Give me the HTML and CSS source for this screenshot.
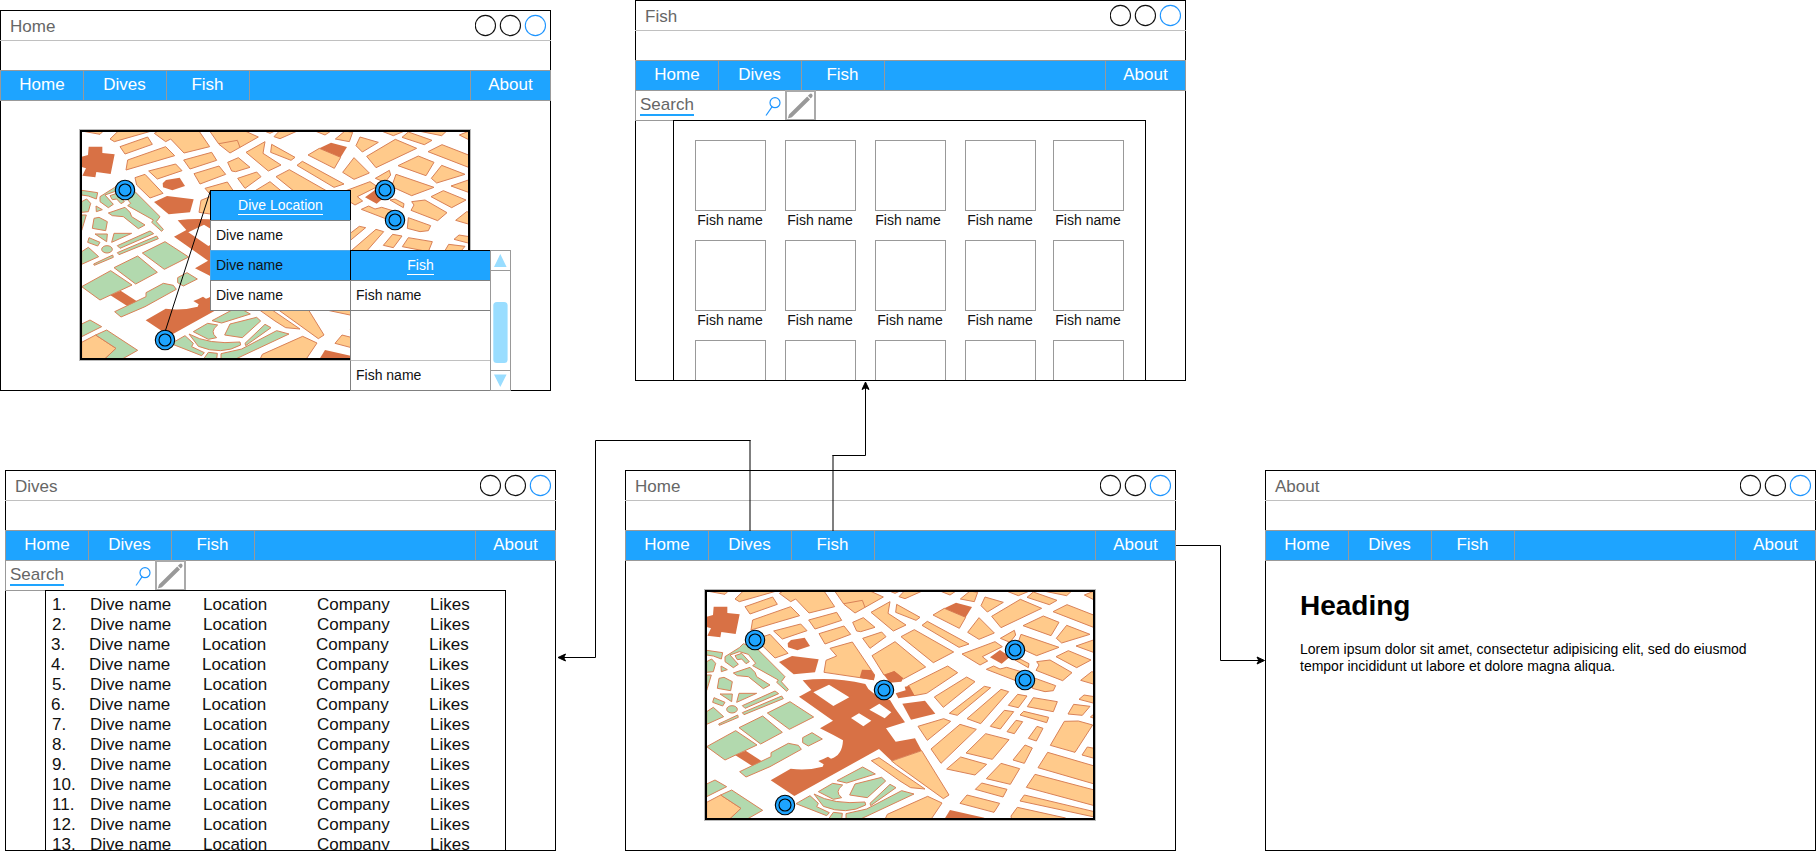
FILE: index.html
```html
<!DOCTYPE html>
<html lang="en">
<head>
<meta charset="utf-8">
<title>Dive site wireframes</title>
<link rel="stylesheet" href="styles.css">
</head>
<body>
<svg class="defs" width="0" height="0" aria-hidden="true">
  <symbol id="city" viewBox="15 15 1170 690">
    <rect x="15" y="15" width="1170" height="690" fill="#fff"/>
    <g class="red">
      <path d="M41,65 82,65 82,84 119,88 107,147 64,141 61,157 22,152 33,130 20,126 20,95 39,90Z"/>
      <path d="M263,175 273,165 314,158 330,183 292,196 264,187Z"/>
      <path d="M237,231 276,213 356,223 345,262 281,268Z"/>
      <path fill-rule="evenodd" d="M308,286Q400,275 496,297L505,312 527,330 570,345 585,370 615,412 558,430 587,470 645,460 665,497 575,528 537,492 283,633 212,586 272,551Q320,558 368,545L371,538 355,528 370,522 384,515 393,521Q427,512 429,466L400,450 360,430 399,407 297,335 334,315ZM340,322 387,299 448,337 400,363ZM453,399 477,385 514,407 490,424ZM508,374 538,356 574,382 554,400Z"/>
      <path d="M105,510 137,497 188,530 160,545Z"/>
    </g>
    <g class="orange">
      <path d="M20,18 85,18 75,28Z"/>
      <path d="M105,42 130,18 230,18 118,50Z"/>
      <path d="M135,65 218,36 232,58 150,87Z"/>
      <path d="M158,105 272,65 299,92 153,135Z"/>
      <path d="M221,138 302,117 321,137 247,162Z"/>
      <path d="M180,158 210,148 264,205 225,219 185,180Z"/>
      <path d="M238,25 250,18 372,18 404,65 327,84 287,42 272,50Z"/>
      <path d="M326,105 410,82 425,106 345,132Z"/>
      <path d="M357,146 432,123 452,148 375,177Z"/>
      <path d="M390,190 457,171 524,270 520,284 372,262 378,226 410,213Z"/>
      <path d="M404,18 510,18 550,36 465,84 432,58Z"/>
      <path class="line" d="M432,56 487,46 495,67"/>
      <path d="M458,112 490,98 525,127 482,140 470,138Z"/>
      <path d="M488,160 545,141 558,155 510,190Z"/>
      <path d="M513,82 570,50 564,85 618,120 580,138Z"/>
      <path d="M590,58 660,97 648,106 587,82Z"/>
      <path d="M568,18 600,18 585,25Z"/>
      <path d="M516,212 585,170 677,246 610,282 583,260 552,270Z"/>
      <path d="M575,528 665,497 747,630 730,641 590,540Z"/>
      <path d="M514,527 537,518 675,612 632,608 600,588Z"/>
      <path d="M555,703 562,688 683,634 726,654 693,703Z"/>
      <path d="M20,652 62,630 123,670 88,703 20,703Z"/>
    </g>
    <g class="red">
      <path d="M479,278 486,254 513,255 524,270 522,286Z"/>
      <path d="M552,270 583,258 610,280 604,290 570,293Z"/>
    </g>
    <g class="orange" transform="translate(585 0)">
      <path d="M12,35 28,18 82,18 30,41Z"/>
      <path d="M135,18 183,18 165,30Z"/>
      <path d="M196,42 225,18 248,22 238,50Z"/>
      <path d="M270,36 325,52 277,81 258,62Z"/>
      <path d="M290,94 376,43 440,70 318,128Z"/>
      <path d="M334,18 404,18 370,32Z"/>
      <path d="M396,37 415,21 486,46 463,59Z"/>
      <path d="M445,18 530,18 515,32Z"/>
      <path d="M568,30 598,18 598,45Z"/>
      <path d="M474,80 516,59 598,91 598,128Z"/>
      <path d="M384,122 445,93 492,112 468,152Z"/>
      <path d="M515,121 585,148 500,174 484,160Z"/>
      <path d="M543,183 598,164 598,203Z"/>
      <path d="M483,215 520,197 588,225 545,248Z"/>
      <path d="M114,90 148,70 212,97 193,130Z"/>
      <path d="M218,142 252,98 298,144 252,163Z"/>
      <path d="M81,121 97,109 222,177 192,187Z"/>
      <path d="M18,155 58,134 176,201 115,233Z"/>
      <path d="M201,207 300,170 322,185 262,215 278,228 255,240Z"/>
      <path d="M316,160 358,136 362,150 345,172Z"/>
      <path d="M365,185 378,148 492,187 425,212Z"/>
      <path d="M425,230 465,225 531,263 503,287 423,256 432,240Z"/>
      <path d="M360,225 375,222 402,236 400,248Z"/>
      <path d="M274,253 296,243 315,252 335,247 385,262 365,288Z"/>
      <path d="M415,278 482,302 475,317 450,320 412,310Z"/>
      <path d="M557,286 590,260 598,262 598,298Z"/>
      <path d="M38,303 158,243 188,263 95,325 57,332Z"/>
      <path d="M118,336 215,276 240,290 145,367Z"/>
      <path d="M163,385 268,304 287,308 187,391Z"/>
      <path d="M216,401 318,313 341,320 257,416Z"/>
      <path d="M340,361 368,328 396,333 370,368Z"/>
      <path d="M397,365 415,338 487,350 475,380Z"/>
      <path d="M552,343 567,330 598,335 598,355Z"/>
      <path d="M519,387 536,358 585,364 562,391Z"/>
      <path d="M586,396 598,386 598,400Z"/>
      <path d="M375,390 386,379 461,397 455,413Z"/>
      <path d="M286,424 328,376 356,380 316,432Z"/>
      <path d="M336,440 363,406 383,410 358,446Z"/>
      <path d="M400,460 426,424 444,430 424,468Z"/>
      <path d="M69,424 146,401 167,409 97,466Z"/>
      <path d="M108,492 195,418 244,433 138,535Z"/>
      <path d="M213,504 272,446 342,464 292,523Z"/>
      <path d="M155,552 197,516 275,538 240,570Z"/>
      <path d="M354,525 390,480 412,489 388,535Z"/>
      <path d="M466,481 508,409 550,408 593,420 540,502Z"/>
      <path d="M561,510 577,486 598,490 598,520Z"/>
      <path d="M429,548 458,502 598,543 598,597Z"/>
      <path d="M394,607 420,568 598,615 598,662Z"/>
      <path d="M375,648 388,630 598,680 598,696Z"/>
      <path d="M348,693 367,667 512,699 510,706 350,706Z"/>
      <path d="M274,581 318,535 374,551 346,598Z"/>
      <path d="M241,613 260,594 336,613 324,636Z"/>
      <path d="M195,655 216,630 314,655 297,682Z"/>
    </g>
    <g class="red" transform="translate(585 0)">
      <path d="M148,70 183,53 231,66 212,97Z"/>
      <path d="M2,325 32,316 29,305 43,303 59,332 10,340Z"/>
      <path d="M22,356 90,347 121,386 48,404Z"/>
      <path d="M285,217 315,195 345,215 320,236Z"/>
      <path d="M148,703 165,675 268,698 268,703Z"/>
    </g>
    <g class="green">
      <path d="M20,196 68,203 64,222 40,213 20,210Z"/>
      <path d="M20,230 35,222 47,235 40,260 20,262Z"/>
      <path d="M20,270 34,270 22,310 20,316Z"/>
      <path d="M52,310 57,280 72,277 97,290 92,317Z"/>
      <path d="M75,215 118,188 130,176 175,195 255,275 244,290 265,313 260,319 230,292 235,285 158,242 167,235 145,208 118,200 90,210 115,238 100,248 75,230Z"/>
      <path d="M105,212 125,205 148,230 138,236 125,222 112,224Z"/>
      <path d="M63,243 82,254 64,260Z"/>
      <path d="M100,264 150,247 165,262 170,275 210,300 190,311 145,275 112,272Z"/>
      <path d="M60,327 97,327 95,350Z"/>
      <path d="M110,352 117,325 170,325Z"/>
      <path d="M42,338 75,352 68,363 38,352Z"/>
      <ellipse cx="96" cy="373" rx="16" ry="11"/>
      <path d="M20,380 40,367 71,395 20,418Z"/>
      <path d="M56,417 113,390 115,397 58,421Z"/>
      <path d="M127,362 225,318 236,326 135,370Z"/>
      <path d="M127,383 245,333 250,341 132,389Z"/>
      <path d="M202,384 270,350 341,396 268,433Z"/>
      <path d="M117,428 188,393 247,442 182,477Z"/>
      <path d="M20,485 107,437 171,480 75,525Z"/>
      <path d="M119,560 213,515 213,503 265,475 295,481 304,493 210,545 138,576Z"/>
      <path d="M308,458 336,443 367,462 325,483 308,473Z"/>
      <path d="M20,597 45,585 80,605 20,635Z"/>
      <path d="M62,630 95,615 188,676 140,703 88,703 123,670Z"/>
      <path d="M288,656 330,632 355,655 350,665 388,683 380,692Z"/>
      <path d="M411,587 488,546 526,567 440,594Z"/>
      <path d="M355,620 398,595 428,600Q402,620 425,638L400,643Z"/>
      <path d="M449,630 465,597 545,577 557,588 502,638Z"/>
      <path d="M342,627Q400,660 495,651L497,660Q440,692 370,664Z"/>
      <path d="M385,703 400,682 427,685 425,703Z"/>
      <path d="M438,686 500,672 605,617 642,627 480,703 438,703Z"/>
      <path d="M510,655 570,598 588,608 512,662Z"/>
    </g>
    <rect x="18" y="18" width="1164" height="684" fill="none" stroke="#000" stroke-width="6"/>
  </symbol>
  <symbol id="pin" viewBox="0 0 22 22">
    <circle cx="11" cy="11" r="9.7" fill="#1ea4ff" stroke="#000" stroke-width="1.1"/>
    <circle cx="11" cy="11" r="6" fill="none" stroke="#000" stroke-width="1.1"/>
  </symbol>
  <symbol id="controls" viewBox="0 0 72 24">
    <g fill="none" stroke-width="1.1">
      <circle cx="10.4" cy="12.5" r="10.1" stroke="#111"/>
      <circle cx="35.4" cy="12.5" r="10.1" stroke="#111"/>
      <circle cx="60.4" cy="12.5" r="10.1" stroke="#1e95ff"/>
    </g>
  </symbol>
  <symbol id="lens" viewBox="0 0 17 20">
    <g fill="none" stroke="#1e95ff" stroke-width="1.2">
      <ellipse cx="11" cy="5.7" rx="5" ry="5"/>
      <path d="M8,9.9 2,18.5"/>
    </g>
  </symbol>
  <symbol id="pencil" viewBox="0 0 31 31">
    <rect x="1" y="1" width="29" height="29" fill="#fff" stroke="#aaa" stroke-width="2"/>
    <path fill="#999" d="M2.8,28.5 4,24.4 22.2,6.6 25,9.4 6.9,27.3ZM22.9,5.8 24.5,4.2Q26,3 27.1,4.2 28.2,5.6 27.1,7L25.7,8.6Z"/>
  </symbol>
</svg>

<main class="board">

  <section class="window home-open">
    <header class="titlebar"><span>Home</span><svg class="controls"><use href="#controls"/></svg></header>
    <nav class="nav"><a>Home</a><a>Dives</a><a>Fish</a><i></i><a class="last">About</a></nav>
    <div class="map-area">
      <div class="map">
        <svg class="city"><use href="#city"/></svg>
        <svg class="pin p1"><use href="#pin"/></svg>
        <svg class="pin p3"><use href="#pin"/></svg>
        <svg class="pin p4"><use href="#pin"/></svg>
        <svg class="pin p5"><use href="#pin"/></svg>
      </div>
    </div>
    <div class="popup dives-popup">
      <div class="popup-head"><span>Dive Location</span></div>
      <div class="row">Dive name</div>
      <div class="row selected">Dive name</div>
      <div class="row">Dive name</div>
    </div>
    <div class="popup fish-popup">
      <div class="fish-list">
        <div class="popup-head"><span>Fish</span></div>
        <div class="row">Fish name</div>
        <div class="spacer"></div>
        <div class="row end">Fish name</div>
      </div>
      <svg class="scrollbar" viewBox="0 0 21 141">
        <rect x=".5" y=".5" width="20" height="140" fill="#fff" stroke="#999"/>
        <path d="M0,20.5H21M0,120.5H21" stroke="#999"/>
        <path fill="#99ddff" d="M10.3,4 16.6,17H4ZM4,124.5H16.6L10.3,137Z"/>
        <rect x="3.3" y="52" width="14.3" height="61" rx="3.5" fill="#99ddff"/>
      </svg>
    </div>
  </section>

  <section class="window fish">
    <header class="titlebar"><span>Fish</span><svg class="controls"><use href="#controls"/></svg></header>
    <nav class="nav"><a>Home</a><a>Dives</a><a>Fish</a><i></i><a class="last">About</a></nav>
    <div class="tools"><div class="search"><span>Search</span><svg class="lens"><use href="#lens"/></svg></div><svg class="pencil"><use href="#pencil"/></svg></div>
    <div class="panel fish-grid">
      <figure><div></div><figcaption>Fish name</figcaption></figure>
      <figure><div></div><figcaption>Fish name</figcaption></figure>
      <figure class="nudge"><div></div><figcaption>Fish name</figcaption></figure>
      <figure><div></div><figcaption>Fish name</figcaption></figure>
      <figure><div></div><figcaption>Fish name</figcaption></figure>
      <figure><div></div><figcaption>Fish name</figcaption></figure>
      <figure><div></div><figcaption>Fish name</figcaption></figure>
      <figure><div></div><figcaption>Fish name</figcaption></figure>
      <figure><div></div><figcaption>Fish name</figcaption></figure>
      <figure><div></div><figcaption>Fish name</figcaption></figure>
      <figure><div></div></figure>
      <figure><div></div></figure>
      <figure><div></div></figure>
      <figure><div></div></figure>
      <figure><div></div></figure>
    </div>
  </section>

  <section class="window dives">
    <header class="titlebar"><span>Dives</span><svg class="controls"><use href="#controls"/></svg></header>
    <nav class="nav"><a>Home</a><a>Dives</a><a>Fish</a><i></i><a class="last">About</a></nav>
    <div class="tools"><div class="search"><span>Search</span><svg class="lens"><use href="#lens"/></svg></div><svg class="pencil"><use href="#pencil"/></svg></div>
    <div class="panel dive-list">
      <div class="dive"><span>1.</span><span>Dive name</span><span>Location</span><span>Company</span><span>Likes</span></div>
      <div class="dive"><span>2.</span><span>Dive name</span><span>Location</span><span>Company</span><span>Likes</span></div>
      <div class="dive shift"><span>3.</span><span>Dive name</span><span>Location</span><span>Company</span><span>Likes</span></div>
      <div class="dive shift"><span>4.</span><span>Dive name</span><span>Location</span><span>Company</span><span>Likes</span></div>
      <div class="dive"><span>5.</span><span>Dive name</span><span>Location</span><span>Company</span><span>Likes</span></div>
      <div class="dive shift"><span>6.</span><span>Dive name</span><span>Location</span><span>Company</span><span>Likes</span></div>
      <div class="dive"><span>7.</span><span>Dive name</span><span>Location</span><span>Company</span><span>Likes</span></div>
      <div class="dive"><span>8.</span><span>Dive name</span><span>Location</span><span>Company</span><span>Likes</span></div>
      <div class="dive"><span>9.</span><span>Dive name</span><span>Location</span><span>Company</span><span>Likes</span></div>
      <div class="dive"><span>10.</span><span>Dive name</span><span>Location</span><span>Company</span><span>Likes</span></div>
      <div class="dive"><span>11.</span><span>Dive name</span><span>Location</span><span>Company</span><span>Likes</span></div>
      <div class="dive"><span>12.</span><span>Dive name</span><span>Location</span><span>Company</span><span>Likes</span></div>
      <div class="dive"><span>13.</span><span>Dive name</span><span>Location</span><span>Company</span><span>Likes</span></div>
    </div>
  </section>

  <section class="window home">
    <header class="titlebar"><span>Home</span><svg class="controls"><use href="#controls"/></svg></header>
    <nav class="nav"><a>Home</a><a>Dives</a><a>Fish</a><i></i><a class="last">About</a></nav>
    <div class="map-area">
      <div class="map">
        <svg class="city"><use href="#city"/></svg>
        <svg class="pin p1"><use href="#pin"/></svg>
        <svg class="pin p2"><use href="#pin"/></svg>
        <svg class="pin p3"><use href="#pin"/></svg>
        <svg class="pin p4"><use href="#pin"/></svg>
        <svg class="pin p5"><use href="#pin"/></svg>
      </div>
    </div>
  </section>

  <section class="window about">
    <header class="titlebar"><span>About</span><svg class="controls"><use href="#controls"/></svg></header>
    <nav class="nav"><a>Home</a><a>Dives</a><a>Fish</a><i></i><a class="last">About</a></nav>
    <article class="article">
      <h1>Heading</h1>
      <p>Lorem ipsum dolor sit amet, consectetur adipisicing elit, sed do eiusmod<br>tempor incididunt ut labore et dolore magna aliqua.</p>
    </article>
  </section>

  <svg class="links" viewBox="0 0 1817 862">
    <g fill="none" stroke="#000">
      <path d="M210.5,190.5 165.3,331"/>
      <path d="M750.5,440.5H595.5V657.5H562"/>
      <path d="M832.5,455.5H865.5V386"/>
      <path d="M1176,545.5H1220.5V660.5H1260"/>
      <path stroke-width="2" stroke="#000" stroke-opacity=".5" d="M750,440V531M833,455V531"/>
    </g>
    <path d="M558,657.5 565.5,654 563.7,657.5 565.5,661ZM865.5,382 862,389.5 865.5,387.7 869,389.5ZM1264.5,660.5 1257,657 1258.8,660.5 1257,664Z" stroke="#000" stroke-width="1"/>
  </svg>
</main>
</body>
</html>
```
FILE: styles.css
```css
* { box-sizing: border-box; }
body {
  margin: 0;
  background: #fff;
  color: #111;
  font-family: "Liberation Sans", Arial, sans-serif;
  font-size: 17px;
  line-height: 20px;
}
.defs { position: absolute; }
.orange path { fill: #ffca8b; stroke: #d98157; stroke-width: 3; }
.orange .line { fill: none; }
.green { fill: #b2d9ae; stroke: #d98157; stroke-width: 3; }
.red { fill: #d87145; }

.board { position: relative; width: 1817px; height: 862px; overflow: hidden; }
.window {
  position: absolute;
  display: flex;
  flex-direction: column;
  width: 551px;
  height: 381px;
  border: 1px solid #000;
  background: #fff;
}
.home-open { left: 0; top: 10px; }
.fish { left: 635px; top: 0; }
.dives { left: 5px; top: 470px; }
.home { left: 625px; top: 470px; }
.about { left: 1265px; top: 470px; }

.titlebar {
  display: flex;
  justify-content: space-between;
  flex: none;
  height: 30px;
  margin: 0 -1px 29px;
  padding: 6px 4px 0 10px;
  border-bottom: 1px solid #c0c0c0;
  color: #666;
}
.controls { width: 72px; height: 24px; margin-top: -4px; }

.nav {
  display: flex;
  flex: none;
  height: 31px;
  margin: 0 -1px;
  border: 1px solid #999;
  background: #1ea4ff;
  color: #fff;
  text-align: center;
}
.nav a { width: 83px; padding: 4px 1px 0 0; border-right: 1px solid #999; }
.nav a:first-child { padding-right: 0; }
.nav i { flex: 1; }
.nav .last { width: 80px; padding-right: 0; border-right: 0; border-left: 1px solid #999; }

.map-area { padding: 29px 0 0 79px; }
.map { position: relative; width: 390px; height: 230px; box-shadow: 0 0 0 1px #bbb; }
.city { display: block; width: 390px; height: 230px; }
.pin { position: absolute; width: 22px; height: 22px; }
.p1 { left: 39px; top: 39px; }
.p2 { left: 168px; top: 89px; }
.p3 { left: 299px; top: 49px; }
.p4 { left: 309px; top: 79px; }
.p5 { left: 69px; top: 204px; }
.home-open .p1 { left: 34px; top: 49px; }
.home-open .p3 { left: 294px; }
.home-open .p4 { left: 304px; }
.home-open .p5 { left: 74px; top: 199px; }

.popup { position: absolute; font-size: 14px; }
.dives-popup { left: 209px; top: 179px; width: 141px; }
.fish-popup { left: 349px; top: 239px; display: flex; }
.fish-list { width: 141px; }
.popup-head {
  height: 30px;
  padding-top: 4px;
  border: 1px solid #000;
  border-bottom: 0;
  background: #1ea4ff;
  color: #fff;
  text-align: center;
}
.popup-head span { display: inline-block; height: 19px; line-height: 18px; border-bottom: 1px solid #fff; }
.row {
  height: 30px;
  padding: 4px 5px 0;
  border: 1px solid #808080;
  border-bottom: 0;
  background: #fff;
}
.row:last-child { height: 31px; border-bottom: 1px solid #808080; }
.selected { border-color: #4ea8e8; background: #1ea4ff; }
.spacer { height: 50px; border: 1px solid #808080; border-bottom: 0; background: #fff; }
.row.end { border-top-color: #c0c0c0; }
.scrollbar { width: 21px; height: 141px; margin-left: -1px; }

.tools { display: flex; flex: none; height: 30px; margin-left: -1px; }
.search {
  display: flex;
  justify-content: space-between;
  width: 151px;
  height: 30px;
  padding: 4px 4px 0 4px;
  border: 1px solid #999;
  border-top: 0;
  color: #666;
}
.search span { height: 21px; border-bottom: 2px solid #1ea4ff; }
.lens { width: 17px; height: 20px; margin-top: 2px; }
.pencil { width: 31px; height: 31px; margin: -1px 0 0 -1px; }

.panel { flex: 1; min-height: 0; margin-top: -1px; border: 1px solid #000; border-bottom: 0; background: #fff; overflow: hidden; }
.fish-grid {
  display: grid;
  grid-template-columns: 90px 90px 90px 88px 71px;
  grid-auto-rows: 100px;
  width: 473px;
  margin-left: 37px;
  padding: 19px 0 0 21px;
  font-size: 14px;
}
.fish-grid figure { width: 71px; margin: 0; text-align: center; }
.fish-grid figure div { height: 71px; border: 1px solid #999; }
.fish-grid figcaption { margin: -1px -4px 0 -5px; white-space: nowrap; }
.fish-grid .nudge figcaption { margin-left: -6px; margin-right: -3px; padding-right: 2px; }
.dive-list { width: 461px; margin-left: 39px; padding: 4px 0 0 6px; }
.dive { display: grid; grid-template-columns: 38px 113px 114px 113px 60px; height: 20px; }
.dive.shift { margin-left: -1px; }

.article { padding: 28px 0 0 34px; color: #000; }
.article h1 { margin: 0 0 18px; font-size: 28px; line-height: 34px; }
.article p { margin: 0; font-size: 14px; line-height: 17px; white-space: nowrap; }

.links { position: absolute; left: 0; top: 0; width: 1817px; height: 862px; pointer-events: none; }
```
